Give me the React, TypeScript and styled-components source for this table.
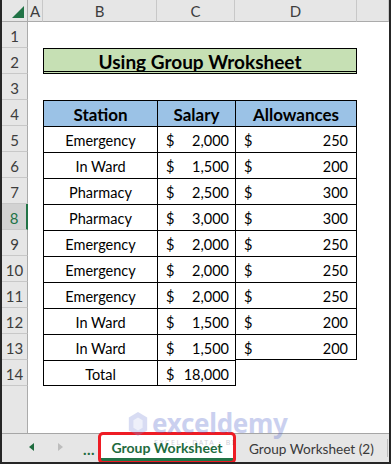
import React from "react";
import styled, { createGlobalStyle, css } from "styled-components";

const Global = createGlobalStyle`
  html, body { margin: 0; padding: 0; background: #ffffff; }
  body { font-family: Lato, "Open Sans", sans-serif; }
`;

const FONT = `Lato, "Noto Sans", sans-serif`;

const Frame = styled.div`
  position: relative;
  width: 391px;
  height: 464px;
  box-sizing: border-box;
  border-left: 2px solid #262626;
  border-right: 2px solid #262626;
  border-bottom: 2px solid #262626;
  display: flex;
  flex-direction: column;
  overflow: hidden;
  background: #fff;
  font-family: ${FONT};
`;

const Sheet = styled.div`
  display: grid;
  grid-template-columns: 26px 15px 114px 78px 122px 1fr;
  grid-template-rows: 22px repeat(14, 26px) 1fr;
  flex: 1;
`;

const headBase = css`
  background: #e6e6e6;
  color: #3d3d3d;
  font-size: 15px;
  display: flex;
  align-items: center;
  justify-content: center;
  box-sizing: border-box;
`;

const Corner = styled.div`
  ${headBase};
  position: relative;
  border-right: 1px solid #ababab;
  border-bottom: 1px solid #ababab;
`;

const CornerTri = styled.svg`
  position: absolute;
  right: 3px;
  bottom: 3px;
`;

const ColHead = styled.div`
  ${headBase};
  border-right: 1px solid #c8c8c8;
  border-bottom: 1px solid #ababab;
  padding-top: 1px;
`;

const RowHead = styled.div<{ $active?: boolean; $filler?: boolean }>`
  ${headBase};
  border-right: 1px solid #ababab;
  border-bottom: ${(p) => (p.$filler ? "none" : "1px solid #c8c8c8")};
  padding-top: 3px;
  ${(p) =>
    p.$active &&
    css`
      background: #d2d2d2;
      color: #217346;
      border-right: 2px solid #217346;
    `}
`;

type CellProps = {
  $span?: number;
  $bg?: string;
  $bold?: boolean;
  $size?: number;
  $t?: boolean;
  $l?: boolean;
  $r?: boolean;
  $b?: boolean;
  $double?: boolean;
  $justify?: string;
};

const Cell = styled.div<CellProps>`
  box-sizing: border-box;
  grid-column: span ${(p) => p.$span ?? 1};
  background: ${(p) => p.$bg ?? "#fff"};
  font-weight: ${(p) => (p.$bold ? 700 : 400)};
  font-size: ${(p) => p.$size ?? 14.5}px;
  color: #000;
  display: flex;
  align-items: center;
  justify-content: ${(p) => p.$justify ?? "center"};
  padding-top: 2px;
  border-top: ${(p) => (p.$t ? "1px solid #000" : "none")};
  border-left: ${(p) => (p.$l ? "1px solid #000" : "none")};
  border-right: ${(p) => (p.$r ? "1px solid #000" : "none")};
  border-bottom: ${(p) =>
    p.$double ? "3px double #000" : p.$b ? "1px solid #000" : "none"};
  white-space: nowrap;
`;

const Money = styled.div<CellProps & { $pr: number }>`
  box-sizing: border-box;
  display: flex;
  justify-content: space-between;
  align-items: center;
  padding: 2px ${(p) => p.$pr}px 0 8px;
  font-size: 14.5px;
  color: #000;
  border-top: ${(p) => (p.$t ? "1px solid #000" : "none")};
  border-left: ${(p) => (p.$l ? "1px solid #000" : "none")};
  border-right: ${(p) => (p.$r ? "1px solid #000" : "none")};
  border-bottom: ${(p) => (p.$b ? "1px solid #000" : "none")};
`;

const TabBar = styled.div`
  position: relative;
  height: 29px;
  flex: none;
  box-sizing: border-box;
  background: #e6e6e6;
  border-top: 1px solid #a6a6a6;
  display: flex;
  align-items: stretch;
  font-family: ${FONT};
`;

const Nav = styled.div`
  width: 96px;
  flex: none;
  display: flex;
  align-items: center;
  padding-left: 27px;
  box-sizing: border-box;
`;

const Arrow = styled.span<{ $dir: "l" | "r"; $on?: boolean }>`
  width: 0;
  height: 0;
  border-top: 4px solid transparent;
  border-bottom: 4px solid transparent;
  ${(p) =>
    p.$dir === "l"
      ? css`border-right: 5px solid ${p.$on ? "#1e6b3e" : "#bdbdbd"};`
      : css`border-left: 5px solid ${p.$on ? "#1e6b3e" : "#bdbdbd"};`}
  margin-right: ${(p) => (p.$dir === "l" ? 24 : 20)}px;
  margin-top: -2px;
`;

const Dots = styled.span`
  color: #1e6b3e;
  font-weight: 700;
  font-size: 15px;
  letter-spacing: 0.5px;
  margin-top: 2px;
`;

const ActiveTab = styled.div`
  position: relative;
  width: 138px;
  flex: none;
  box-sizing: border-box;
  margin-top: -1px;
  padding: 0 3px;
  display: flex;
`;

const ActiveInner = styled.div`
  flex: 1;
  background: #fff;
  border-bottom: 3px solid #217346;
  display: flex;
  align-items: center;
  justify-content: center;
  color: #1e6b3e;
  font-weight: 700;
  font-size: 14px;
  padding-top: 3px;
  margin-bottom: 1px;
`;

const RedMark = styled.div`
  position: absolute;
  left: 0;
  right: 0;
  top: -1px;
  bottom: -2px;
  border: 3px solid #ee1c24;
  border-radius: 5px;
  pointer-events: none;
`;

const Tab = styled.div`
  flex: 1;
  display: flex;
  align-items: center;
  padding-left: 13px;
  padding-top: 2px;
  color: #3a3a3a;
  font-size: 13.6px;
  position: relative;
`;

const TabSep = styled.span`
  position: absolute;
  right: 1px;
  top: 5px;
  bottom: 5px;
  width: 1px;
  background: #bdbdbd;
`;

const Watermark = styled.div`
  position: absolute;
  left: 125px;
  top: 410px;
  display: flex;
  align-items: flex-start;
  gap: 3px;
  opacity: 0.3;
  pointer-events: none;
`;

const WmText = styled.div`
  display: flex;
  flex-direction: column;
  line-height: 1;
`;

const WmBig = styled.span`
  font-family: "Noto Sans", sans-serif;
  font-weight: 700;
  font-size: 26px;
  color: #5466cc;
  letter-spacing: -0.3px;
`;

const WmSmall = styled.span`
  font-family: "Noto Sans", sans-serif;
  font-size: 7px;
  color: #5a5a7a;
  letter-spacing: 1.6px;
  margin-top: 3px;
  margin-left: 2px;
`;

const rows: Array<[string, number, number]> = [
  ["Emergency", 2000, 250],
  ["In Ward", 1500, 200],
  ["Pharmacy", 2500, 300],
  ["Pharmacy", 3000, 300],
  ["Emergency", 2000, 250],
  ["Emergency", 2000, 250],
  ["Emergency", 2000, 250],
  ["In Ward", 1500, 200],
  ["In Ward", 1500, 200],
];

const fmt = (n: number) => n.toLocaleString("en-US");

export default function App() {
  const cols = ["A", "B", "C", "D", ""];
  const body: React.ReactNode[] = [];

  for (let r = 1; r <= 14; r++) {
    body.push(
      <RowHead key={`h${r}`} $active={r === 8}>
        {r}
      </RowHead>
    );
    body.push(<Cell key={`a${r}`} />);
    if (r === 2) {
      body.push(
        <Cell key="title" $span={3} $bg="#c6e0b4" $bold $size={19} $t $l $r $double>
          Using Group Wroksheet
        </Cell>
      );
    } else if (r === 4) {
      body.push(
        <Cell key="hb" $bg="#9bc2e6" $bold $size={17} $t $l>
          Station
        </Cell>,
        <Cell key="hc" $bg="#9bc2e6" $bold $size={17} $t $l>
          Salary
        </Cell>,
        <Cell key="hd" $bg="#9bc2e6" $bold $size={17} $t $l $r>
          Allowances
        </Cell>
      );
    } else if (r >= 5 && r <= 13) {
      const [st, sal, al] = rows[r - 5];
      body.push(
        <Cell key={`b${r}`} $t $l>
          {st}
        </Cell>,
        <Money key={`c${r}`} $pr={6} $t $l>
          <span>$</span>
          <span>{fmt(sal)}</span>
        </Money>,
        <Money key={`d${r}`} $pr={8} $t $l $r $b={r === 13}>
          <span>$</span>
          <span>{fmt(al)}</span>
        </Money>
      );
    } else if (r === 14) {
      body.push(
        <Cell key="b14" $t $l $b>
          Total
        </Cell>,
        <Money key="c14" $pr={6} $t $l $b>
          <span>$</span>
          <span>18,000</span>
        </Money>,
        <Cell key="d14" $l />
      );
    } else {
      body.push(<Cell key={`x${r}`} $span={3} />);
    }
    body.push(<Cell key={`e${r}`} />);
  }

  return (
    <>
      <Global />
      <Frame>
        <Sheet>
          <Corner>
            <CornerTri width="12" height="12" viewBox="0 0 12 12">
              <polygon points="12,0 12,12 0,12" fill="#217346" />
            </CornerTri>
          </Corner>
          {cols.map((c, i) => (
            <ColHead key={i}>{c}</ColHead>
          ))}
          {body}
          <RowHead $filler />
          <Cell $span={5} />
        </Sheet>
        <TabBar>
          <Nav>
            <Arrow $dir="l" $on />
            <Arrow $dir="r" />
            <Dots>...</Dots>
          </Nav>
          <ActiveTab>
            <ActiveInner>Group Worksheet</ActiveInner>
            <RedMark />
          </ActiveTab>
          <Tab>
            Group Worksheet (2)
            <TabSep />
          </Tab>
        </TabBar>
        <Watermark>
          <svg width="22" height="28" viewBox="0 0 24 30">
            <path d="M12 2 L22 8 L22 22 L12 28 L2 22 L2 8 Z" fill="#7f8fd8" />
            <path d="M12 8 L17 11 L17 19 L12 22 L7 19 L7 11 Z" fill="#c9d0f0" />
          </svg>
          <WmText>
            <WmBig>exceldemy</WmBig>
            <WmSmall>EXCEL · DATA · BI</WmSmall>
          </WmText>
        </Watermark>
      </Frame>
    </>
  );
}
